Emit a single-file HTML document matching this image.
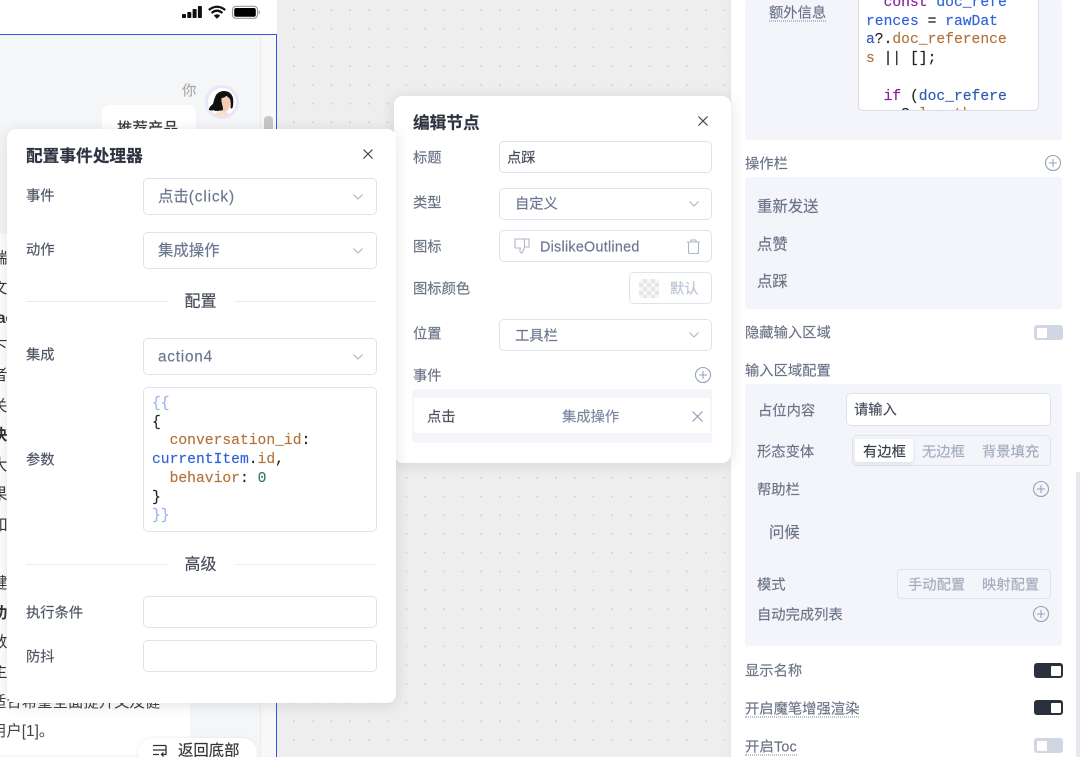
<!DOCTYPE html>
<html><head><meta charset="utf-8"><style>
*{box-sizing:border-box}
html,body{margin:0;padding:0;width:1080px;height:757px;overflow:hidden;background:#eee}
#r{position:absolute;left:0;top:0;width:1080px;height:757px;overflow:hidden;filter:blur(.35px);font-family:"Liberation Sans","Noto Sans CJK SC",sans-serif;font-size:14.3px;color:#4e5566;background-color:#eeeeee;background-image:radial-gradient(circle at 1px 1px,#d4d4d4 .9px,transparent 1.2px);background-size:18.72px 18.72px;background-position:293px 9px}
.a{position:absolute}
.t{position:absolute;white-space:nowrap;line-height:20px;height:20px;transform:translateY(1.5px);-webkit-text-stroke:.15px currentColor}
.box{position:absolute;background:#fff;border:1.3px solid #dde2ee;border-radius:5px}
.modal{position:absolute;background:#fff;border-radius:9px;box-shadow:0 2px 14px rgba(30,40,60,.13)}
.v{font-size:15.4px;color:#6b7590}
.l{color:#4c5363}
.p{color:#6b7386}
.h{font-size:16.7px;font-weight:700;color:#2d3340}
.panel{position:absolute;background:#f3f5fa;border-radius:3px}
.code{position:absolute;font-family:"Liberation Mono",monospace;font-size:14.67px;line-height:18.7px;white-space:pre;color:#222;-webkit-text-stroke:.15px currentColor}
.k{color:#b3723a}.b{color:#2f63d8}.g{color:#2f7a57}.br{color:#9db4ec}.pu{color:#8a1f9e}.n{color:#2a5cb0}
.line{position:absolute;height:1.3px;background:#e7ebf4}
.tg{position:absolute;width:29px;height:15px;border-radius:3px;background:#d0d6e2}
.tg i{position:absolute;left:3px;top:2.5px;width:10px;height:10px;background:#fff;border-radius:1px}
.tg.on{background:#2b303d}.tg.on i{left:17px}
.u{border-bottom:1.5px dotted #7c8496;height:18px!important}
svg{position:absolute;overflow:visible}
.lf{position:absolute;left:-8px;white-space:nowrap;font-size:15.4px;line-height:20px;color:#333;transform:translateY(1px)}
</style></head><body><div id="r">

<!-- phone -->
<div class="a" style="left:0;top:0;width:277px;height:757px;background:#f5f6f8"></div>
<div class="a" style="left:0;top:0;width:277px;height:34px;background:#fff"></div>
<div class="a" style="left:260px;top:35px;width:16px;height:722px;background:#f8f8f8;border-left:1px solid #ececee"></div>
<div class="a" style="left:264px;top:116px;width:9px;height:40px;border-radius:4px;background:#c6c6c6"></div>
<div class="a" style="left:0;top:34px;width:277px;height:1.2px;background:#2f55ee"></div>
<div class="a" style="left:276px;top:34px;width:1.2px;height:723px;background:#2f55ee"></div>

<svg style="left:182px;top:5px" width="80" height="15" viewBox="0 0 80 15">
<rect x="0" y="9" width="4" height="4" rx=".8" fill="#111"/><rect x="5.300" y="7" width="4" height="6" rx=".8" fill="#111"/><rect x="10.600" y="4" width="4" height="9" rx=".8" fill="#111"/><rect x="15.900" y="1" width="4" height="12" rx=".8" fill="#111"/>
<path d="M26.800 5Q35 -1.500 43.200 5M29.600 8Q35 3.400 40.400 8" fill="none" stroke="#111" stroke-width="2.300"/><path d="M31.800 10.600Q35 8 38.200 10.600L35 13.800Z" fill="#111"/>
<rect x="50.500" y="1.300" width="25" height="12" rx="3.400" fill="none" stroke="#999" stroke-width="1.100"/><rect x="52.200" y="3" width="21.600" height="8.700" rx="2" fill="#000"/><rect x="76.600" y="5.600" width="1.400" height="3.600" rx=".7" fill="#aaa"/>
</svg>

<div class="t" style="left:182px;top:80px;color:#a8a8a8;font-size:14.3px">你</div>
<svg style="left:204px;top:84px" width="36" height="36" viewBox="0 0 36 36">
<circle cx="18" cy="18" r="15.500" fill="#fff" stroke="#e8e6fa" stroke-width="3"/>
<path d="M14 22h7l1 6 4 2.500-8 3-8-3 4-2.500z" fill="#f6e0d0"/>
<path d="M16 13h10v8q-1 5-5 7-4-1-5-5z" fill="#f4cdb4"/>
<path d="M5 25q1-3 4-5 1-5 3-9 3-4 8-4 7 0 9 7 .8 6-.5 10-1.300 1-2 0 .5-5-.5-9-2-2-3.500-3-3 2-5 2-.5 3 .5 6 1 3 1 6-2 1-4 .5-1 1-3 .3-1 .5-2-.5-3 .5-5-.3z" fill="#111"/>
</svg>
<div class="a" style="left:102px;top:105px;width:94px;height:60px;background:#fff;border-radius:8px"></div>
<div class="t" style="left:117px;top:118px;font-size:15.4px;color:#333">推荐产品</div>

<div class="a" style="left:0;top:234px;width:190px;height:521px;background:#fff"></div>
<div class="lf" style="top:248px">端对</div>
<div class="lf" style="top:278px">文所</div>
<div class="lf" style="top:308px;font-weight:700;left:-3px">ac</div>
<div class="lf" style="top:337px">下级</div>
<div class="lf" style="top:365px">者对</div>
<div class="lf" style="top:396px">关注</div>
<div class="lf" style="top:425px;font-weight:700">决精</div>
<div class="lf" style="top:455px">大参</div>
<div class="lf" style="top:484px">果历</div>
<div class="lf" style="top:515px">如问</div>
<div class="lf" style="top:573px">健康</div>
<div class="lf" style="top:603px;font-weight:700">功能</div>
<div class="lf" style="top:632px">数头</div>
<div class="lf" style="top:662px">主上</div>
<div class="lf" style="top:692px;left:-9px;color:#444">适合希望全面提升文及健</div>
<div class="lf" style="top:721px;left:-9px;color:#444">用户[1]。</div>

<div class="a" style="left:138px;top:738px;width:119px;height:30px;border-radius:15px;background:#fff;box-shadow:0 0 4px rgba(0,0,0,.08)"></div>
<svg style="left:152px;top:744px" width="16" height="13" viewBox="0 0 16 13" fill="none" stroke="#333" stroke-width="1.300"><path d="M1 1.500h13M1 6h13M1 10.500h6M14 1.500v9h-4M11.500 8.500L9.500 10.500l2 2"/></svg>
<div class="t" style="left:178px;top:740px;font-size:15.4px;color:#333">返回底部</div>

<!-- right panel -->
<div class="a" style="left:731px;top:0;width:349px;height:757px;background:#fff;box-shadow:-1px 0 6px rgba(30,40,60,.05)"></div>
<div class="a" style="left:1076px;top:472px;width:4px;height:285px;background:#e3e8f1"></div>
<div class="panel" style="left:745px;top:0;width:317px;height:140px"></div>
<div class="t p u" style="left:769px;top:2px">额外信息</div>
<div class="box" style="left:858px;top:-10px;width:181px;height:121px;overflow:hidden;border-color:#d9deea">
<div class="code" style="left:7px;top:3px">  <span class="pu">const</span> <span class="b">doc_refe</span>
<span class="b">rences</span> = <span class="b">rawDat</span>
<span class="n">a</span>?.<span class="k">doc_reference</span>
<span class="k">s</span> || [];

  <span class="pu">if</span> (<span class="n">doc_refere</span>
    ?.<span class="k">length</span></div></div>

<div class="t p" style="left:745px;top:153px">操作栏</div>
<svg style="left:1045px;top:155px" width="16" height="16" viewBox="0 0 16 16" fill="none" stroke="#98a2b8" stroke-width="1.100"><circle cx="8" cy="8" r="7.500"/><path d="M4 8h8M8 4v8"/></svg>
<div class="panel" style="left:745px;top:177px;width:317px;height:132px"></div>
<div class="t p" style="left:757px;top:196px;font-size:15.4px">重新发送</div>
<div class="t p" style="left:757px;top:234px;font-size:15.4px">点赞</div>
<div class="t p" style="left:757px;top:271px;font-size:15.4px">点踩</div>
<div class="t p" style="left:745px;top:322px">隐藏输入区域</div>
<div class="tg" style="left:1034px;top:325px"><i></i></div>
<div class="t p" style="left:745px;top:360px">输入区域配置</div>
<div class="panel" style="left:745px;top:384px;width:317px;height:262px"></div>
<div class="t p" style="left:758px;top:400px">占位内容</div>
<div class="box" style="left:846px;top:393px;width:205px;height:33px"></div>
<div class="t" style="left:854px;top:399px;color:#444b5a">请输入</div>
<div class="t p" style="left:757px;top:441px">形态变体</div>
<div class="a" style="left:852px;top:435px;width:199px;height:31px;border:1.300px solid #dfe3ee;border-radius:5px;background:#f3f5fa"></div>
<div class="a" style="left:855px;top:439px;width:58px;height:23px;background:#fff;border-radius:3px;box-shadow:0 2px 5px rgba(60,70,100,.1)"></div>
<div class="t" style="left:863px;top:441px;color:#333a48">有边框</div>
<div class="t" style="left:922px;top:441px;color:#a3abbd">无边框</div>
<div class="t" style="left:982px;top:441px;color:#a3abbd">背景填充</div>
<div class="t p" style="left:757px;top:479px">帮助栏</div>
<svg style="left:1033px;top:481px" width="16" height="16" viewBox="0 0 16 16" fill="none" stroke="#98a2b8" stroke-width="1.100"><circle cx="8" cy="8" r="7.500"/><path d="M4 8h8M8 4v8"/></svg>
<div class="t p" style="left:769px;top:522px;font-size:15.4px">问候</div>
<div class="t p" style="left:757px;top:574px">模式</div>
<div class="a" style="left:897px;top:569px;width:154px;height:30px;border:1.300px solid #dfe3ee;border-radius:5px"></div>
<div class="t" style="left:908px;top:574px;color:#a3abbd">手动配置</div>
<div class="t" style="left:982px;top:574px;color:#a3abbd">映射配置</div>
<div class="t p" style="left:757px;top:604px">自动完成列表</div>
<svg style="left:1033px;top:606px" width="16" height="16" viewBox="0 0 16 16" fill="none" stroke="#98a2b8" stroke-width="1.100"><circle cx="8" cy="8" r="7.500"/><path d="M4 8h8M8 4v8"/></svg>
<div class="t p" style="left:745px;top:660px">显示名称</div>
<div class="tg on" style="left:1034px;top:663px"><i></i></div>
<div class="t p u" style="left:745px;top:698px">开启魔笔增强渲染</div>
<div class="tg on" style="left:1034px;top:700px"><i></i></div>
<div class="t p u" style="left:745px;top:736px;letter-spacing:.2px">开启Toc</div>
<div class="tg" style="left:1034px;top:738px"><i></i></div>

<!-- modal 2 -->
<div class="a" style="left:727px;top:276px;width:9px;height:9px;background:#fff;transform:rotate(45deg)"></div>
<div class="modal" style="left:394px;top:96px;width:337px;height:367px"></div>
<div class="a" style="left:394px;top:411px;width:9px;height:9px;background:#fff;transform:rotate(45deg)"></div>
<div class="t h" style="left:413px;top:112px">编辑节点</div>
<svg style="left:698px;top:116px" width="10" height="10" viewBox="0 0 10 10" stroke="#3a404d" stroke-width="1.200"><path d="M.5.5l9 9M9.500.5l-9 9"/></svg>
<div class="t l" style="left:413px;top:147px;color:#6b7386">标题</div>
<div class="box" style="left:499px;top:141px;width:213px;height:32px"></div>
<div class="t" style="left:507px;top:147px;color:#444b5a">点踩</div>
<div class="t l" style="left:413px;top:192px;color:#6b7386">类型</div>
<div class="box" style="left:499px;top:188px;width:213px;height:32px"></div>
<div class="t" style="left:515px;top:193px;color:#6b7590">自定义</div>
<svg style="left:689px;top:201px" width="10" height="6" viewBox="0 0 10 6" fill="none" stroke="#aab2c4" stroke-width="1.100"><path d="M.5.5L5 5l4.500-4.500"/></svg>
<div class="t l" style="left:413px;top:236px;color:#6b7386">图标</div>
<div class="box" style="left:499px;top:230px;width:213px;height:32px"></div>
<svg style="left:514px;top:238px" width="16" height="16" viewBox="0 0 16 16" fill="none" stroke="#aeb6c8" stroke-width="1.100"><path d="M1 1h9.500v8.500L8 15q-2.600-.5-2-3.500l.3-1.500H2.400Q.7 10 1 8.400z"/><path d="M10.500 1H15v8h-4.500"/></svg>
<div class="t" style="left:540px;top:236px;color:#6b7590;font-size:14.3px;letter-spacing:.28px">DislikeOutlined</div>
<svg style="left:686px;top:239px" width="15" height="15" viewBox="0 0 15 15" fill="none" stroke="#aeb6c8" stroke-width="1.100"><path d="M1 3h13M5 3V1h5v2M2.500 3v10.500a1 1 0 0 0 1 1h8a1 1 0 0 0 1-1V3"/></svg>
<div class="t l" style="left:413px;top:278px;color:#6b7386">图标颜色</div>
<div class="box" style="left:629px;top:272px;width:83px;height:32px"></div>
<div class="a" style="left:639px;top:279px;width:20px;height:19px;border-radius:2px;background:repeating-conic-gradient(#e6e6e8 0 25%,#f8f8f9 0 50%) 0 0/8px 8px"></div>
<div class="t" style="left:670px;top:278px;color:#bcc3d2">默认</div>
<div class="t l" style="left:413px;top:323px;color:#6b7386">位置</div>
<div class="box" style="left:499px;top:319px;width:213px;height:32px"></div>
<div class="t" style="left:515px;top:325px;color:#6b7590">工具栏</div>
<svg style="left:689px;top:332px" width="10" height="6" viewBox="0 0 10 6" fill="none" stroke="#aab2c4" stroke-width="1.100"><path d="M.5.5L5 5l4.500-4.500"/></svg>
<div class="t l" style="left:413px;top:365px;color:#6b7386">事件</div>
<svg style="left:695px;top:367px" width="16" height="16" viewBox="0 0 16 16" fill="none" stroke="#98a2b8" stroke-width="1.100"><circle cx="8" cy="8" r="7.500"/><path d="M4 8h8M8 4v8"/></svg>
<div class="panel" style="left:412px;top:389px;width:300px;height:54px"></div>
<div class="a" style="left:414px;top:398px;width:296px;height:35px;background:#fff"></div>
<div class="t" style="left:427px;top:406px;color:#4c5363">点击</div>
<div class="t" style="left:562px;top:406px;color:#7c86a0">集成操作</div>
<svg style="left:692px;top:411px" width="11" height="11" viewBox="0 0 11 11" stroke="#8f99b0" stroke-width="1.100"><path d="M.5.5l10 10M10.500.5l-10 10"/></svg>

<!-- modal 1 -->
<div class="modal" style="left:7px;top:129px;width:389px;height:574px"></div>
<div class="t h" style="left:26px;top:145px">配置事件处理器</div>
<svg style="left:363px;top:149px" width="10" height="10" viewBox="0 0 10 10" stroke="#3a404d" stroke-width="1.200"><path d="M.5.5l9 9M9.500.5l-9 9"/></svg>
<div class="t l" style="left:26px;top:185px">事件</div>
<div class="box" style="left:143px;top:178px;width:234px;height:37px"></div>
<div class="t v" style="left:158px;top:186px"><span>点击</span><span style="letter-spacing:.85px">(click)</span></div>
<svg style="left:353px;top:194px" width="10" height="6" viewBox="0 0 10 6" fill="none" stroke="#aab2c4" stroke-width="1.100"><path d="M.5.5L5 5l4.500-4.500"/></svg>
<div class="t l" style="left:26px;top:239px">动作</div>
<div class="box" style="left:143px;top:232px;width:234px;height:37px"></div>
<div class="t v" style="left:158px;top:240px">集成操作</div>
<svg style="left:353px;top:248px" width="10" height="6" viewBox="0 0 10 6" fill="none" stroke="#aab2c4" stroke-width="1.100"><path d="M.5.5L5 5l4.500-4.500"/></svg>
<div class="line" style="left:26px;top:301px;width:142px"></div>
<div class="line" style="left:235px;top:301px;width:142px"></div>
<div class="t" style="left:184.500px;top:291px;font-size:16px;color:#454b58">配置</div>
<div class="t l" style="left:26px;top:344px">集成</div>
<div class="box" style="left:143px;top:338px;width:234px;height:37px"></div>
<div class="t v" style="left:158px;top:346px;letter-spacing:.75px">action4</div>
<svg style="left:353px;top:354px" width="10" height="6" viewBox="0 0 10 6" fill="none" stroke="#aab2c4" stroke-width="1.100"><path d="M.5.5L5 5l4.500-4.500"/></svg>
<div class="t l" style="left:26px;top:449px">参数</div>
<div class="box" style="left:143px;top:387px;width:234px;height:145px"></div>
<div class="code" style="left:152px;top:395px"><span class="br">{{</span>
{
  <span class="k">conversation_id</span>:
<span class="b">currentItem</span>.<span class="k">id</span>,
  <span class="k">behavior</span>: <span class="g">0</span>
}
<span class="br">}}</span></div>
<div class="line" style="left:26px;top:564px;width:142px"></div>
<div class="line" style="left:235px;top:564px;width:142px"></div>
<div class="t" style="left:184.500px;top:554px;font-size:16px;color:#454b58">高级</div>
<div class="t l" style="left:26px;top:602px">执行条件</div>
<div class="box" style="left:143px;top:596px;width:234px;height:32px"></div>
<div class="t l" style="left:26px;top:646px">防抖</div>
<div class="box" style="left:143px;top:640px;width:234px;height:32px"></div>

</div></body></html>
